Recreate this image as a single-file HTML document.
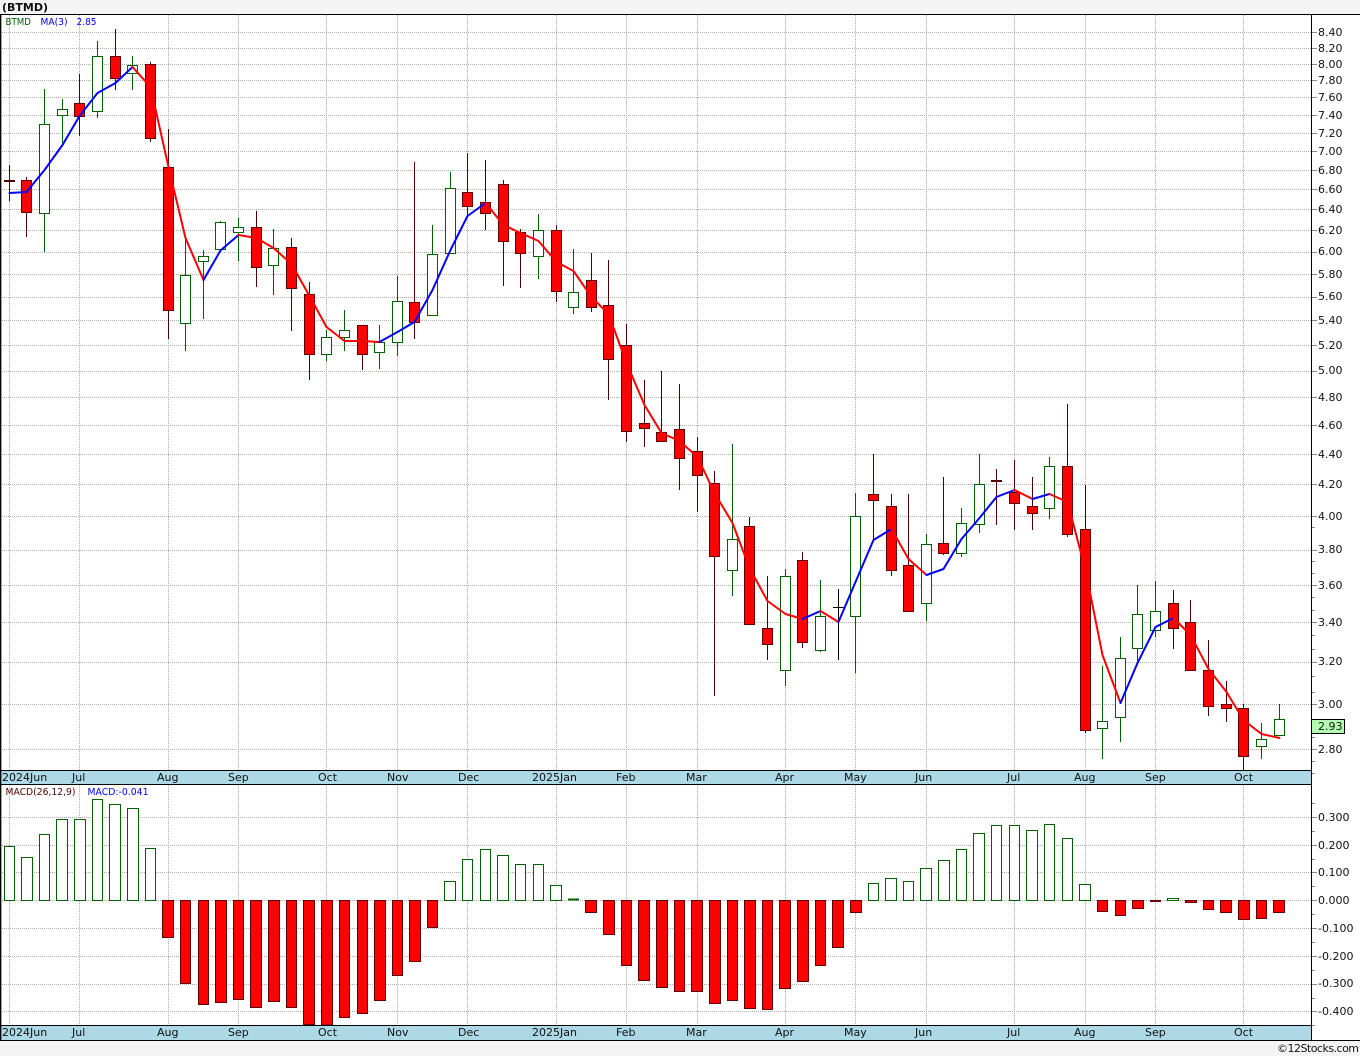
<!DOCTYPE html>
<html><head><meta charset="utf-8"><title>BTMD</title>
<style>
html,body{margin:0;padding:0;background:#f4f4f4;width:1360px;height:1056px;overflow:hidden}
svg{display:block}
text{font-family:"DejaVu Sans","Liberation Sans",sans-serif;font-size:11px;fill:#111}
.g{stroke:#acacac;stroke-width:1;stroke-dasharray:1 1;fill:none}
.t{stroke:#888;stroke-width:1;fill:none}
.rw{stroke:#500000;stroke-width:1;fill:none}
.gw{stroke:#006000;stroke-width:1;fill:none}
.rb{stroke:#600000;stroke-width:1;fill:#f00}
.gb{stroke:#006000;stroke-width:1;fill:#fff}
.ma{stroke-width:2;fill:none;stroke-linejoin:round;stroke-linecap:round}
</style></head><body>
<svg width="1360" height="1056" viewBox="0 0 1360 1056" xmlns="http://www.w3.org/2000/svg">
<rect x="0" y="0" width="1360" height="1056" fill="#f4f4f4"/>
<rect x="0" y="14" width="1360" height="1026" fill="#fff"/>
<text x="2" y="11" style="font-weight:bold;font-size:11px">(BTMD)</text>

<!-- grid -->
<path class="g" d="M2 32.5H1311M2 48.5H1311M2 64.5H1311M2 80.5H1311M2 97.5H1311M2 115.5H1311M2 133.5H1311M2 151.5H1311M2 170.5H1311M2 189.5H1311M2 209.5H1311M2 230.5H1311M2 252.5H1311M2 274.5H1311M2 297.5H1311M2 320.5H1311M2 345.5H1311M2 371.5H1311M2 397.5H1311M2 425.5H1311M2 454.5H1311M2 484.5H1311M2 516.5H1311M2 550.5H1311M2 585.5H1311M2 622.5H1311M2 662.5H1311M2 704.5H1311M2 749.5H1311"/>
<path class="g" d="M2 817.5H1311M2 845.5H1311M2 872.5H1311M2 900.5H1311M2 928.5H1311M2 956.5H1311M2 984.5H1311M2 1011.5H1311"/>
<path class="g" d="M9.5 15V770M79.5 15V770M168.5 15V770M238.5 15V770M326.5 15V770M397.5 15V770M467.5 15V770M556.5 15V770M626.5 15V770M697.5 15V770M785.5 15V770M855.5 15V770M926.5 15V770M1014.5 15V770M1085.5 15V770M1155.5 15V770M1243.5 15V770"/>
<path class="g" d="M9.5 785V1025M79.5 785V1025M168.5 785V1025M238.5 785V1025M326.5 785V1025M397.5 785V1025M467.5 785V1025M556.5 785V1025M626.5 785V1025M697.5 785V1025M785.5 785V1025M855.5 785V1025M926.5 785V1025M1014.5 785V1025M1085.5 785V1025M1155.5 785V1025M1243.5 785V1025"/>

<!-- wicks -->
<path class="rw" d="M9.5 165V201M26.5 177V237M79.5 74V136M115.5 29V90M150.5 62V142M168.5 129V339M256.5 211V287M291.5 238V331M309.5 282V380M362.5 325V370M414.5 162V339M467.5 153V216M485.5 160V230M503.5 180V286M520.5 229V288M556.5 225V302M591.5 253V312M608.5 260V400M626.5 324V442M644.5 380V447M661.5 371V442M679.5 384V490M697.5 437V512M714.5 471V696M749.5 517V624M767.5 576V660M802.5 552V648M873.5 454V540M891.5 494V576M908.5 494V611M943.5 477V555M996.5 469V525M1014.5 460V530M1032.5 477V530M1067.5 404V537M1085.5 485V733M1173.5 590V649M1190.5 600V670M1208.5 640V716M1226.5 681V722M1243.5 704V770"/>
<path class="gw" d="M44.5 89V252M62.5 99V143M97.5 41V118M132.5 56V90M185.5 237V351M203.5 250V319M220.5 221V250M238.5 218V261M273.5 229V295M326.5 330V361M344.5 310V351M379.5 325V369M397.5 276V356M432.5 225V316M450.5 172V254M538.5 214V279M573.5 249V314M732.5 444V596M785.5 569V686M820.5 580V652M855.5 493V673M926.5 534V621M961.5 508V557M979.5 454V533M1049.5 457V519M1102.5 666V759M1120.5 637V742M1137.5 585V663M1155.5 581V637M1261.5 723V759M1279.5 704V720"/>
<path d="M838.5 589V660M833 607.5H844" stroke="#000" stroke-width="1" fill="none"/>
<path d="M4 181H15M991 481H1002" stroke="#500000" stroke-width="2" fill="none"/>

<!-- bodies -->
<path class="rb" d="M21.5 180.5h10V212.5h-10zM74.5 103.5h10V116.5h-10zM110.5 56.5h10V78.5h-10zM145.5 64.5h10V138.5h-10zM163.5 167.5h10V310.5h-10zM251.5 227.5h10V267.5h-10zM286.5 247.5h10V288.5h-10zM304.5 294.5h10V354.5h-10zM357.5 325.5h10V354.5h-10zM409.5 302.5h10V322.5h-10zM462.5 192.5h10V206.5h-10zM480.5 202.5h10V213.5h-10zM498.5 184.5h10V241.5h-10zM515.5 232.5h10V253.5h-10zM551.5 230.5h10V291.5h-10zM586.5 280.5h10V307.5h-10zM603.5 305.5h10V359.5h-10zM621.5 345.5h10V431.5h-10zM639.5 423.5h10V428.5h-10zM656.5 432.5h10V441.5h-10zM674.5 429.5h10V458.5h-10zM692.5 451.5h10V475.5h-10zM709.5 483.5h10V556.5h-10zM744.5 526.5h10V624.5h-10zM762.5 628.5h10V644.5h-10zM797.5 560.5h10V642.5h-10zM868.5 494.5h10V500.5h-10zM886.5 506.5h10V570.5h-10zM903.5 565.5h10V611.5h-10zM938.5 543.5h10V553.5h-10zM1009.5 492.5h10V503.5h-10zM1027.5 506.5h10V513.5h-10zM1062.5 466.5h10V534.5h-10zM1080.5 529.5h10V730.5h-10zM1168.5 603.5h10V628.5h-10zM1185.5 622.5h10V670.5h-10zM1203.5 670.5h10V706.5h-10zM1221.5 704.5h10V708.5h-10zM1238.5 708.5h10V756.5h-10z"/>
<path class="gb" d="M39.5 124.5h10V213.5h-10zM57.5 109.5h10V115.5h-10zM92.5 56.5h10V111.5h-10zM127.5 65.5h10V73.5h-10zM180.5 275.5h10V323.5h-10zM198.5 256.5h10V261.5h-10zM215.5 222.5h10V249.5h-10zM233.5 227.5h10V232.5h-10zM268.5 248.5h10V265.5h-10zM321.5 337.5h10V354.5h-10zM339.5 330.5h10V337.5h-10zM374.5 342.5h10V352.5h-10zM392.5 301.5h10V342.5h-10zM427.5 254.5h10V315.5h-10zM445.5 188.5h10V253.5h-10zM533.5 230.5h10V256.5h-10zM568.5 292.5h10V307.5h-10zM727.5 539.5h10V570.5h-10zM780.5 576.5h10V670.5h-10zM815.5 616.5h10V650.5h-10zM850.5 516.5h10V616.5h-10zM921.5 544.5h10V603.5h-10zM956.5 523.5h10V553.5h-10zM974.5 484.5h10V524.5h-10zM1044.5 466.5h10V508.5h-10zM1097.5 721.5h10V728.5h-10zM1115.5 658.5h10V717.5h-10zM1132.5 614.5h10V648.5h-10zM1150.5 611.5h10V630.5h-10zM1256.5 739.5h10V746.5h-10zM1274.5 719.5h10V735.5h-10z"/>

<!-- MA lines -->
<path class="ma" stroke="#00f" d="M9.5 193L26.5 192L44.5 170L62.5 145L79.5 116L97.5 93L115.5 83L132.5 67"/>
<path class="ma" stroke="#f00" d="M132.5 67L150.5 87L168.5 167L185.5 238L203.5 280"/>
<path class="ma" stroke="#00f" d="M203.5 280L220.5 250.5L238.5 235"/>
<path class="ma" stroke="#f00" d="M238.5 235L256.5 238L273.5 248L291.5 264L309.5 296L326.5 327L344.5 341L362.5 341L379.5 342"/>
<path class="ma" stroke="#00f" d="M379.5 342L397.5 332L414.5 322L432.5 290L450.5 250L467.5 216L485.5 203"/>
<path class="ma" stroke="#f00" d="M485.5 203L503.5 225L520.5 233L538.5 241L556.5 262L573.5 271L591.5 297L608.5 314L626.5 363L644.5 405L661.5 433L679.5 441L697.5 457L714.5 493L732.5 523L749.5 568L767.5 601L785.5 614L802.5 619"/>
<path class="ma" stroke="#00f" d="M802.5 619L820.5 611"/>
<path class="ma" stroke="#f00" d="M820.5 611L838.5 622"/>
<path class="ma" stroke="#00f" d="M838.5 622L855.5 582L873.5 540L891.5 529"/>
<path class="ma" stroke="#f00" d="M891.5 529L908.5 559L926.5 575"/>
<path class="ma" stroke="#00f" d="M926.5 575L943.5 569L961.5 539L979.5 518L996.5 497L1014.5 490"/>
<path class="ma" stroke="#f00" d="M1014.5 490L1032.5 499"/>
<path class="ma" stroke="#00f" d="M1032.5 499L1049.5 494"/>
<path class="ma" stroke="#f00" d="M1049.5 494L1067.5 502L1085.5 570L1102.5 655L1120.5 703"/>
<path class="ma" stroke="#00f" d="M1120.5 703L1137.5 663L1155.5 627L1173.5 618"/>
<path class="ma" stroke="#f00" d="M1173.5 618L1190.5 635L1208.5 669L1226.5 692L1243.5 720L1261.5 734L1279.5 738"/>

<!-- MACD bars -->
<path class="gb" d="M4.5 846.5h10V900.5h-10zM21.5 857.5h11V900.5h-11zM39.5 834.5h10V900.5h-10zM56.5 819.5h11V900.5h-11zM74.5 819.5h11V900.5h-11zM92.5 799.5h10V900.5h-10zM109.5 804.5h11V900.5h-11zM127.5 808.5h11V900.5h-11zM145.5 848.5h10V900.5h-10zM444.5 881.5h11V900.5h-11zM462.5 859.5h10V900.5h-10zM480.5 849.5h10V900.5h-10zM497.5 855.5h11V900.5h-11zM515.5 864.5h10V900.5h-10zM533.5 864.5h10V900.5h-10zM550.5 885.5h11V900.5h-11zM868.5 883.5h10V900.5h-10zM885.5 878.5h11V900.5h-11zM903.5 881.5h10V900.5h-10zM920.5 868.5h11V900.5h-11zM938.5 860.5h11V900.5h-11zM956.5 849.5h10V900.5h-10zM973.5 833.5h11V900.5h-11zM991.5 825.5h10V900.5h-10zM1009.5 825.5h10V900.5h-10zM1026.5 830.5h11V900.5h-11zM1044.5 824.5h10V900.5h-10zM1062.5 838.5h10V900.5h-10zM1079.5 884.5h11V900.5h-11zM1167.5 898.5h11V900.5h-11z"/>
<path d="M568 899.5H579" stroke="#006000" stroke-width="2" fill="none"/>
<path class="rb" d="M162.5 900.5h11V937.5h-11zM180.5 900.5h10V983.5h-10zM198.5 900.5h10V1004.5h-10zM215.5 900.5h11V1002.5h-11zM233.5 900.5h10V999.5h-10zM250.5 900.5h11V1007.5h-11zM268.5 900.5h11V1001.5h-11zM286.5 900.5h10V1007.5h-10zM303.5 900.5h11V1024.5h-11zM321.5 900.5h11V1025h-11zM339.5 900.5h10V1017.5h-10zM357.5 900.5h10V1013.5h-10zM374.5 900.5h11V1000.5h-11zM392.5 900.5h10V975.5h-10zM409.5 900.5h11V961.5h-11zM427.5 900.5h10V927.5h-10zM585.5 900.5h11V912.5h-11zM603.5 900.5h11V934.5h-11zM621.5 900.5h10V965.5h-10zM638.5 900.5h11V980.5h-11zM656.5 900.5h11V987.5h-11zM674.5 900.5h10V991.5h-10zM691.5 900.5h11V991.5h-11zM709.5 900.5h11V1003.5h-11zM727.5 900.5h10V1000.5h-10zM744.5 900.5h11V1008.5h-11zM762.5 900.5h10V1009.5h-10zM779.5 900.5h11V988.5h-11zM797.5 900.5h11V981.5h-11zM815.5 900.5h10V965.5h-10zM832.5 900.5h11V947.5h-11zM850.5 900.5h11V912.5h-11zM1097.5 900.5h10V911.5h-10zM1115.5 900.5h10V915.5h-10zM1132.5 900.5h11V908.5h-11zM1150.5 900.5h10V901.5h-10zM1185.5 900.5h11V902.5h-11zM1203.5 900.5h10V909.5h-10zM1220.5 900.5h11V912.5h-11zM1238.5 900.5h11V919.5h-11zM1256.5 900.5h10V918.5h-10zM1273.5 900.5h11V912.5h-11z"/>

<!-- bands -->
<rect x="0" y="771" width="1311" height="13" fill="#add8e6"/>
<rect x="0" y="1026" width="1311" height="14" fill="#add8e6"/>
<path d="M0 14.5H1360M0 770.5H1311M0 784.5H1311M0 1025.5H1311M0 1040.5H1360M1311.5 14V1040M.5 14V1040" stroke="#000" stroke-width="1" fill="none"/>
<path d="M1.5 14V1040" stroke="#000" stroke-width="1" fill="none" opacity=".35"/>

<!-- axis ticks -->
<path class="t" d="M1312 32.5h5M1312 48.5h5M1312 64.5h5M1312 80.5h5M1312 97.5h5M1312 115.5h5M1312 133.5h5M1312 151.5h5M1312 170.5h5M1312 189.5h5M1312 209.5h5M1312 230.5h5M1312 252.5h5M1312 274.5h5M1312 297.5h5M1312 320.5h5M1312 345.5h5M1312 371.5h5M1312 397.5h5M1312 425.5h5M1312 454.5h5M1312 484.5h5M1312 516.5h5M1312 550.5h5M1312 585.5h5M1312 622.5h5M1312 662.5h5M1312 704.5h5M1312 749.5h5"/>
<path class="t" d="M1312 527.5h3M1312 561.5h3M1312 573.5h3M1312 597.5h3M1312 610.5h3M1312 635.5h3M1312 649.5h3M1312 676.5h3M1312 692.5h3M1312 737.5h3M1312 761.5h3M1312 773.5h3"/>
<path class="t" d="M1312 817.5h5M1312 845.5h5M1312 872.5h5M1312 900.5h5M1312 928.5h5M1312 956.5h5M1312 984.5h5M1312 1011.5h5M1312 803.5h3M1312 831.5h3M1312 859.5h3M1312 886.5h3M1312 914.5h3M1312 942.5h3M1312 970.5h3M1312 998.5h3M1312 1025.5h3"/>

<!-- legends -->
<text x="5.5" y="25" textLength="25.5" lengthAdjust="spacingAndGlyphs" style="font-size:10px;fill:#006000">BTMD</text>
<text x="40.5" y="25" textLength="27" lengthAdjust="spacingAndGlyphs" style="font-size:10px;fill:#00f">MA(3)</text>
<text x="76.5" y="25" textLength="20" lengthAdjust="spacingAndGlyphs" style="font-size:10px;fill:#00f">2.85</text>
<text x="5.5" y="795" textLength="70" lengthAdjust="spacingAndGlyphs" style="font-size:10px;fill:#500000">MACD(26,12,9)</text>
<text x="87.5" y="795" textLength="61" lengthAdjust="spacingAndGlyphs" style="font-size:10px;fill:#00f">MACD:-0.041</text>

<!-- price labels -->
<g>
<text x="1318" y="36">8.40</text><text x="1318" y="52">8.20</text><text x="1318" y="68">8.00</text><text x="1318" y="84">7.80</text><text x="1318" y="101">7.60</text><text x="1318" y="119">7.40</text><text x="1318" y="137">7.20</text><text x="1318" y="155">7.00</text><text x="1318" y="174">6.80</text><text x="1318" y="193">6.60</text><text x="1318" y="213">6.40</text><text x="1318" y="234">6.20</text><text x="1318" y="255">6.00</text><text x="1318" y="278">5.80</text><text x="1318" y="300">5.60</text><text x="1318" y="324">5.40</text><text x="1318" y="349">5.20</text><text x="1318" y="374">5.00</text><text x="1318" y="401">4.80</text><text x="1318" y="429">4.60</text><text x="1318" y="458">4.40</text><text x="1318" y="488">4.20</text><text x="1318" y="520">4.00</text><text x="1318" y="553">3.80</text><text x="1318" y="589">3.60</text><text x="1318" y="626">3.40</text><text x="1318" y="665">3.20</text><text x="1318" y="708">3.00</text><text x="1318" y="753">2.80</text>
</g>
<rect x="1311.5" y="719.5" width="33" height="14" fill="#b4ffb4" stroke="#000"/>
<text x="1318" y="730">2.93</text>
<g>
<text x="1318" y="821">0.300</text><text x="1318" y="849">0.200</text><text x="1318" y="876">0.100</text><text x="1318" y="904">0.000</text><text x="1318" y="932">-0.100</text><text x="1318" y="960">-0.200</text><text x="1318" y="987">-0.300</text><text x="1318" y="1015">-0.400</text>
</g>

<!-- month labels -->
<g>
<text x="2" y="781">2024Jun</text><text x="72" y="781">Jul</text><text x="157" y="781">Aug</text><text x="228" y="781">Sep</text><text x="318" y="781">Oct</text><text x="387" y="781">Nov</text><text x="458" y="781">Dec</text><text x="532" y="781">2025Jan</text><text x="616" y="781">Feb</text><text x="686" y="781">Mar</text><text x="775" y="781">Apr</text><text x="844" y="781">May</text><text x="915" y="781">Jun</text><text x="1007" y="781">Jul</text><text x="1074" y="781">Aug</text><text x="1145" y="781">Sep</text><text x="1234" y="781">Oct</text>
<text x="2" y="1036">2024Jun</text><text x="72" y="1036">Jul</text><text x="157" y="1036">Aug</text><text x="228" y="1036">Sep</text><text x="318" y="1036">Oct</text><text x="387" y="1036">Nov</text><text x="458" y="1036">Dec</text><text x="532" y="1036">2025Jan</text><text x="616" y="1036">Feb</text><text x="686" y="1036">Mar</text><text x="775" y="1036">Apr</text><text x="844" y="1036">May</text><text x="915" y="1036">Jun</text><text x="1007" y="1036">Jul</text><text x="1074" y="1036">Aug</text><text x="1145" y="1036">Sep</text><text x="1234" y="1036">Oct</text>
</g>
<text x="1277" y="1052" textLength="82" lengthAdjust="spacing" style="font-size:11px">©12Stocks.com</text>
</svg>
</body></html>
